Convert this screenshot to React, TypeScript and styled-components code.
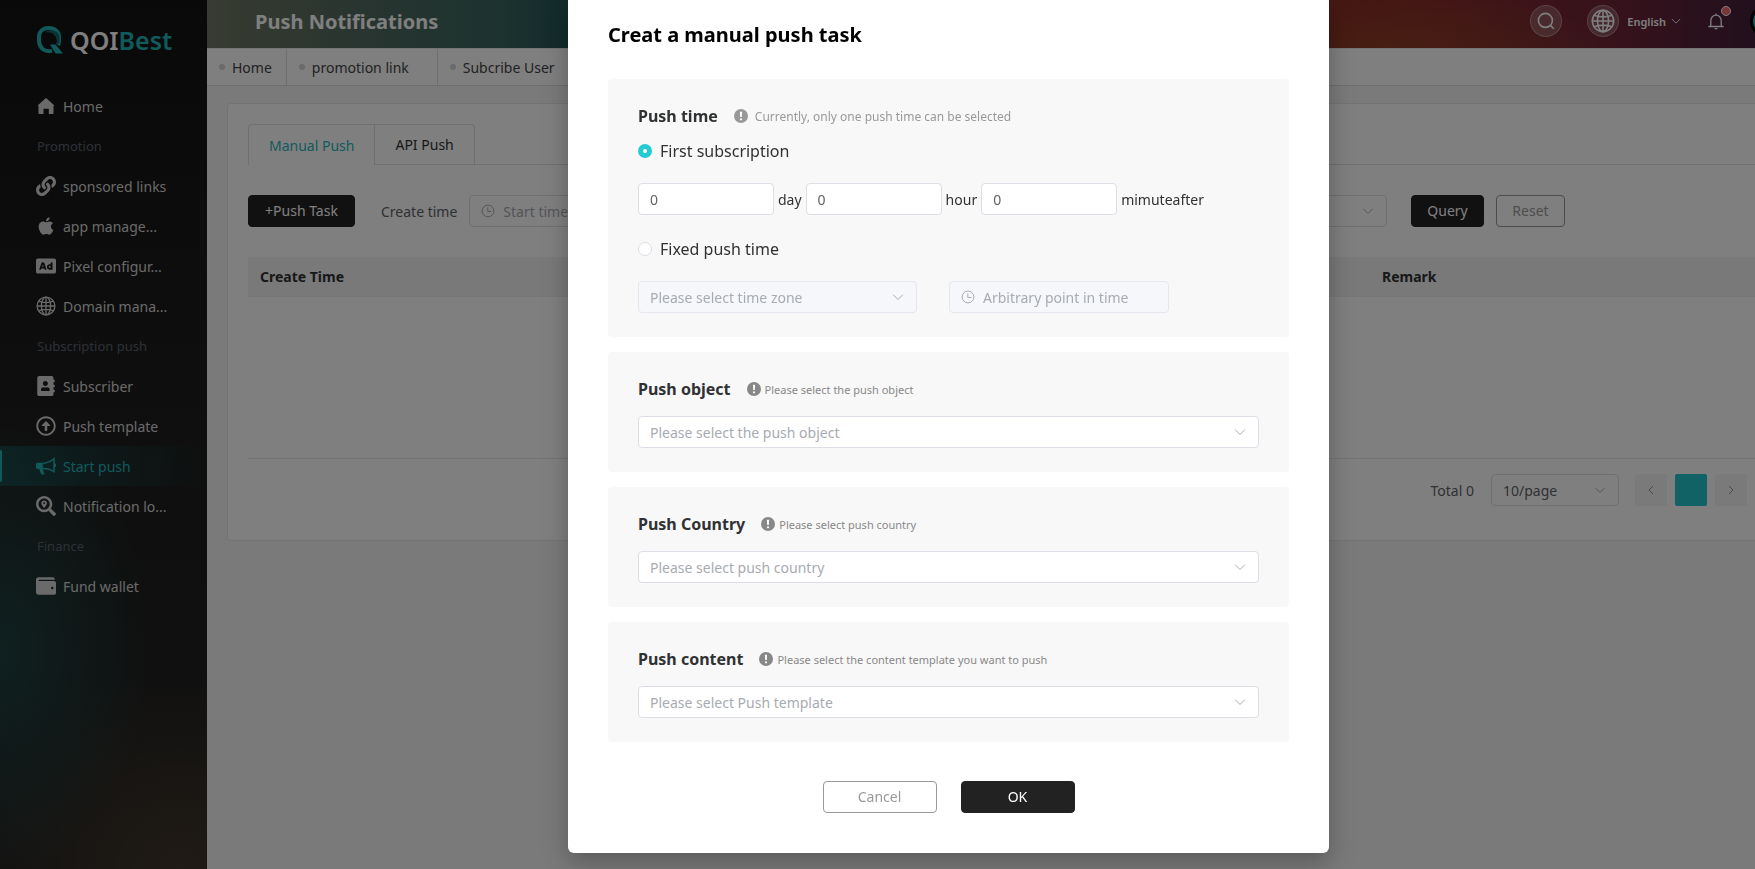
import React from "react";
import styled, { createGlobalStyle, css } from "styled-components";
import {
  FaAd,
  FaAddressBook,
  FaApple,
  FaLink,
  FaRegArrowAltCircleUp,
  FaSearchLocation,
  FaWallet,
} from "react-icons/fa";

const GlobalStyle = createGlobalStyle`
  *, *::before, *::after { box-sizing: border-box; }
  html, body, #root { height: 100%; }
  body { margin: 0; overflow: hidden; background: #f5f5f5; color: #303133; }
  body, button, input, select {
    font-family: "Noto Sans", "Open Sans", sans-serif;
    font-size: 14px;
  }
  h1, h2, h3, ul, p { margin: 0; padding: 0; font-weight: inherit; }
`;

/* ---------- icons ---------- */

const Stroke = styled.svg.attrs({ fill: "none", stroke: "currentColor" })<{ $size: number }>`
  width: ${(p) => p.$size}px;
  height: ${(p) => p.$size}px;
  flex: none;
`;

const ChevronDown = ({ size = 14 }: { size?: number }) => (
  <Stroke $size={size} viewBox="0 0 14 14" aria-hidden="true">
    <path d="M2.2 4.7 7 9.5l4.8-4.8" />
  </Stroke>
);

const ChevronSide = ({ flip }: { flip?: boolean }) => (
  <Stroke $size={12} viewBox="0 0 12 12" aria-hidden="true">
    <path d={flip ? "M4 2l4 4-4 4" : "M8 2 4 6l4 4"} />
  </Stroke>
);

const ClockIcon = () => (
  <Stroke $size={14} viewBox="0 0 14 14" aria-hidden="true">
    <circle cx="7" cy="7" r="5.9" />
    <path d="M6.8 3.4v4.1h3.6" />
  </Stroke>
);

const GlobeIcon = ({ size }: { size: number }) => (
  <Stroke $size={size} viewBox="0 0 20 20" strokeWidth="1.3" aria-hidden="true">
    <circle cx="10" cy="10" r="8.9" />
    <ellipse cx="10" cy="10" rx="4.6" ry="8.9" />
    <path d="M10 1v18M1 10h18M2.6 5.2c4 1.8 10.8 1.8 14.8 0M2.6 14.8c4-1.8 10.8-1.8 14.8 0" />
  </Stroke>
);

const SearchIcon = () => (
  <Stroke $size={18} viewBox="0 0 18 18" strokeWidth="1.6" aria-hidden="true">
    <circle cx="8.4" cy="8.4" r="7" />
    <path d="m13.4 13.4 3.4 3.4" />
  </Stroke>
);

const BellIcon = () => (
  <Stroke $size={18} viewBox="0 0 18 18" strokeWidth="1.3" aria-hidden="true">
    <path d="M3.8 14.3V8.4a5.2 5.2 0 0 1 10.4 0v5.9M1.4 14.5h15.2M9 1.4v1.8M7.6 16.6h2.8" />
  </Stroke>
);

const HomeIcon = () => (
  <svg viewBox="0 0 20 20" fill="currentColor" aria-hidden="true">
    <path d="M9.3 2.6a1 1 0 0 1 1.4 0l7.1 6.3c.5.5.3 1-.3 1v7.3c0 .5-.3.8-.8.8h-3.9v-5.2H7.5V18H3.3c-.5 0-.8-.3-.8-.8V9.9c-.6 0-.8-.5-.3-1z" />
  </svg>
);

const MegaphoneIcon = () => (
  <svg viewBox="0 0 20 20" aria-hidden="true">
    <path
      fill="currentColor"
      d="M1.5 6.8h5.3v6.6l1.5 4.1c.2.5 0 .9-.5.9H5.9c-.5 0-.8-.2-1-.6L3.3 12.9H1.5c-.9 0-1.5-.6-1.5-1.5V8.3c0-.9.6-1.5 1.5-1.5z"
    />
    <path
      fill="none"
      stroke="currentColor"
      strokeWidth="1.5"
      d="M7 7.4c4.4-.4 7.9-2 11-4.7v13c-3.1-2.2-6.6-3.2-11-3.2M18 7.7c1.8.4 1.8 2.8 0 3.2"
    />
  </svg>
);

const InfoMark = () => (
  <svg width="14" height="14" viewBox="0 0 14 14" aria-hidden="true">
    <circle cx="7" cy="7" r="7" fill="currentColor" />
    <path d="M5.9 2.8h2.2l-.3 5.3H6.2z" fill="#fff" />
    <circle cx="7" cy="10.3" r="1.1" fill="#fff" />
  </svg>
);

const LogoMark = () => (
  <svg width="26" height="28" viewBox="0 0 26 28" aria-hidden="true">
    <path
      fill="none"
      stroke="#22b4b9"
      strokeWidth="4"
      d="M15 24.9C6.5 26.5 2 21 2 14.5V11C2 5.5 6 2 11.5 2 18 2 22 5.5 22 11v4c0 1.5-.4 3-1 4"
    />
    <path d="M8 6.5C12 3 20 3.5 22.5 9.5v7L20 19.5C20.5 11 17 5 8 6.5z" fill="#14666a" />
    <path d="M13 18.5h5.5l7.5 9h-7.5z" fill="#22b4b9" />
  </svg>
);

/* ---------- sidebar ---------- */

const Shell = styled.div`
  display: flex;
  min-height: 100%;
`;

const Sidebar = styled.aside`
  flex: none;
  width: 207px;
  background:
    radial-gradient(ellipse 150px 230px at 0 650px, rgba(30, 74, 72, 0.8), rgba(30, 74, 72, 0) 100%),
    radial-gradient(ellipse 220px 200px at 180px 100%, rgba(74, 60, 46, 0.75), rgba(74, 60, 46, 0) 100%),
    linear-gradient(#131313, #1e1e1e 50%, #222);
`;

const Logo = styled.div`
  display: flex;
  align-items: center;
  gap: 7px;
  height: 86px;
  padding: 0 0 6px 37px;
  font-size: 25px;
  font-weight: 600;
  line-height: 28px;
  color: #fff;
`;

const LogoTail = styled.span`
  color: #22b4b9;
`;

const NavList = styled.ul`
  list-style: none;
`;

const NavGroup = styled.li`
  padding-left: 37px;
  font-size: 13px;
  line-height: 40px;
  color: #5a616e;
`;

const NavLink = styled.a<{ $active?: boolean }>`
  position: relative;
  display: flex;
  align-items: center;
  gap: 7px;
  height: 40px;
  padding: 0 36px;
  color: #d4d4d4;
  text-decoration: none;
  white-space: nowrap;

  svg {
    width: 20px;
    height: 20px;
    flex: none;
  }

  ${(p) =>
    p.$active &&
    css`
      color: #22b4b9;
      background: linear-gradient(90deg, rgba(20, 120, 124, 0.4), rgba(20, 120, 124, 0));

      &::before {
        content: "";
        position: absolute;
        left: 0;
        top: 4px;
        width: 2px;
        height: 32px;
        border-radius: 0 2px 2px 0;
        background: #22b4b9;
      }
    `}
`;

type NavEntry = { group: string } | { label: string; icon: React.ReactNode; active?: boolean };

const NAV: NavEntry[] = [
  { label: "Home", icon: <HomeIcon /> },
  { group: "Promotion" },
  { label: "sponsored links", icon: <FaLink /> },
  { label: "app manage...", icon: <FaApple /> },
  { label: "Pixel configur...", icon: <FaAd /> },
  { label: "Domain mana...", icon: <GlobeIcon size={20} /> },
  { group: "Subscription push" },
  { label: "Subscriber", icon: <FaAddressBook /> },
  { label: "Push template", icon: <FaRegArrowAltCircleUp /> },
  { label: "Start push", icon: <MegaphoneIcon />, active: true },
  { label: "Notification lo...", icon: <FaSearchLocation /> },
  { group: "Finance" },
  { label: "Fund wallet", icon: <FaWallet /> },
];

/* ---------- page header ---------- */

const Main = styled.main`
  flex: 1;
  min-width: 0;
`;

const Header = styled.header`
  display: flex;
  align-items: center;
  height: 48px;
  padding: 0 0 6px 48px;
  overflow: hidden;
  color: #fff;
  background:
    radial-gradient(ellipse 240px 56px at 76% 100%, rgba(150, 84, 30, 0.45), rgba(150, 84, 30, 0)),
    linear-gradient(90deg, #707660 0, #546a60 9%, #38665f 19%, #265658 23%, #402030 50%, #8a2c26 72%, #862a2c 80%, #6a2438 92%, #42203a 100%);
`;

const PageTitle = styled.h1`
  flex: 1;
  font-size: 20px;
  font-weight: 700;
`;

const HeaderTools = styled.div`
  display: flex;
  align-items: center;
  gap: 25px;
  height: 42px;
`;

const RoundButton = styled.button`
  display: grid;
  place-items: center;
  width: 32px;
  height: 32px;
  padding: 0;
  color: #fff;
  border: 1px solid rgba(255, 255, 255, 0.3);
  border-radius: 50%;
  background: rgba(255, 255, 255, 0.2);
`;

const Language = styled.button`
  display: flex;
  align-items: center;
  gap: 4px;
  margin-left: -17px;
  padding: 0;
  font-size: 11px;
  font-weight: 600;
  color: #fff;
  border: 0;
  background: none;
`;

const BellButton = styled.button`
  position: relative;
  display: grid;
  padding: 0;
  color: #fff;
  border: 0;
  background: none;
`;

const BellDot = styled.span`
  position: absolute;
  top: -6px;
  right: -6px;
  width: 10px;
  height: 10px;
  border: 1px solid #fff;
  border-radius: 50%;
  background: #f56c6c;
`;

const Avatar = styled.span`
  flex: none;
  width: 32px;
  height: 32px;
  margin-right: -27px;
  border: 3px solid #000;
  border-radius: 50%;
  background: #22b4b9;
`;

const VisitedTabs = styled.nav`
  display: flex;
  height: 38px;
  border-top: 1px solid #e8e8e8;
  border-bottom: 1px solid #dcdcdc;
  background: #fff;
`;

const VisitedTab = styled.a<{ $closable?: boolean }>`
  display: flex;
  align-items: center;
  gap: 7px;
  padding: 0 ${(p) => (p.$closable ? 28 : 14)}px 0 12px;
  color: #444;
  text-decoration: none;
  white-space: nowrap;
  border-right: 1px solid #dcdcdc;

  &::before {
    content: "";
    width: 6px;
    height: 6px;
    border-radius: 50%;
    background: #d4d4d4;
  }
`;

/* ---------- page content ---------- */

const Card = styled.section`
  margin: 17px 0 0 20px;
  padding: 20px 0 34px 20px;
  border: solid #e4e7ed;
  border-width: 1px 0 1px 1px;
  border-radius: 4px 0 0 4px;
  background: #fff;
`;

const TabStrip = styled.div`
  display: flex;
  height: 41px;
  border-bottom: 1px solid #dfdfdf;
`;

const TabButton = styled.button<{ $active?: boolean }>`
  height: ${(p) => (p.$active ? 41 : 40)}px;
  padding: 0 20px;
  color: ${(p) => (p.$active ? "#25b5ba" : "#303133")};
  border: solid #dfdfdf;
  border-width: 1px 1px 0 ${(p) => (p.$active ? 1 : 0)}px;
  border-radius: ${(p) => (p.$active ? "4px 0 0 0" : "0 4px 0 0")};
  background: #fff;
`;

const Filters = styled.form`
  display: flex;
  align-items: center;
  height: 32px;
  margin: 30px 190px 30px 0;
`;

const Button = styled.button<{ $dark?: boolean; $width?: number }>`
  flex: none;
  width: ${(p) => (p.$width ? `${p.$width}px` : "auto")};
  height: 32px;
  padding: 0;
  line-height: 20px;
  white-space: nowrap;
  color: ${(p) => (p.$dark ? "#fff" : "#999")};
  border: 1px solid ${(p) => (p.$dark ? "#222" : "#999")};
  border-radius: 4px;
  background: ${(p) => (p.$dark ? "#222" : "#fff")};
`;

const FilterLabel = styled.label`
  padding: 0 12px 0 26px;
  color: #606266;
  white-space: nowrap;
`;

const FilterActions = styled.div`
  display: flex;
  gap: 12px;
  margin-left: 24px;
`;

const Field = styled.div<{ $width?: number; $disabled?: boolean; $grow?: boolean }>`
  display: flex;
  align-items: center;
  ${(p) => (p.$grow ? "flex: 1;" : "flex: none;")}
  width: ${(p) => (p.$width ? `${p.$width}px` : "auto")};
  height: 32px;
  padding: 0 11px;
  gap: 8px;
  color: #a8abb2;
  border: 1px solid ${(p) => (p.$disabled ? "#e4e7ed" : "#dcdfe6")};
  border-radius: 4px;
  background: ${(p) => (p.$disabled ? "#f5f7fa" : "#fff")};
`;

const TextInput = styled.input`
  flex: 1;
  width: 0;
  min-width: 0;
  height: 30px;
  padding: 0;
  color: #606266;
  border: 0;
  outline: 0;
  background: none;

  &::placeholder {
    color: #a8abb2;
    opacity: 1;
  }
`;

const NativeSelect = styled.select<{ $filled?: boolean }>`
  flex: 1;
  width: 0;
  height: 30px;
  padding: 0;
  color: ${(p) => (p.$filled ? "#606266" : "#a8abb2")};
  opacity: 1;
  border: 0;
  outline: 0;
  appearance: none;
  background: none;
`;

const DataTable = styled.table`
  width: 100%;
  table-layout: fixed;
  border-spacing: 0;

  th {
    height: 40px;
    padding: 0 12px;
    text-align: left;
    font-weight: 700;
    color: #303133;
    border-bottom: 1px solid #ebeef5;
    background: #f2f2f2;
  }

  td {
    height: 162px;
    border-bottom: 1px solid #e4e7ed;
  }
`;

const Pagination = styled.div`
  display: flex;
  align-items: center;
  justify-content: flex-end;
  margin: 15px 8px 0 0;
  color: #606266;
`;

const Pager = styled.div`
  display: flex;
  gap: 8px;
  margin-left: 16px;
`;

const PageButton = styled.button<{ $current?: boolean }>`
  display: grid;
  place-items: center;
  width: 32px;
  height: 32px;
  padding: 0;
  color: #909399;
  border: 0;
  border-radius: 2px;
  background: ${(p) => (p.$current ? "#20c4ca" : "#f4f4f6")};
`;

const PageTotal = styled.span`
  margin-right: 17px;
`;

/* ---------- dialog ---------- */

const Overlay = styled.div`
  position: fixed;
  inset: 0;
  display: flex;
  justify-content: center;
  align-items: flex-start;
  padding-left: 142px;
  background: rgba(0, 0, 0, 0.5);
`;

const Dialog = styled.div`
  width: 761px;
  padding: 20px 40px 40px;
  border-radius: 0 0 6px 6px;
  background: #fff;
  box-shadow: 0 12px 32px 4px rgba(0, 0, 0, 0.12), 0 8px 20px rgba(0, 0, 0, 0.16);
`;

const DialogTitle = styled.h2`
  margin-bottom: 29px;
  font-size: 20px;
  font-weight: 700;
  line-height: 30px;
  color: #000;
`;

const Panels = styled.div`
  display: grid;
  gap: 15px;
`;

const Panel = styled.section`
  padding: 25px 30px 24px;
  border-radius: 4px;
  background: #f8f8f8;
`;

const PanelHead = styled.div`
  display: flex;
  align-items: center;
  gap: 16px;
  height: 24px;
`;

const PanelTitle = styled.h3`
  font-size: 16px;
  font-weight: 700;
  line-height: 24px;
  color: #303133;
`;

const Hint = styled.p<{ $large?: boolean }>`
  display: flex;
  align-items: center;
  gap: ${(p) => (p.$large ? 7 : 4)}px;
  font-size: ${(p) => (p.$large ? 12 : 11)}px;
  color: ${(p) => (p.$large ? "#999" : "#888")};
`;

const PanelBody = styled.div`
  display: flex;
  margin-top: 15px;

  > * {
    flex: 1;
  }
`;

const RadioLine = styled.label<{ $gap: number }>`
  display: flex;
  align-items: center;
  gap: 8px;
  height: 24px;
  margin-top: ${(p) => p.$gap}px;
  font-size: 16px;
`;

const Radio = styled.input.attrs({ type: "radio" })`
  width: 14px;
  height: 14px;
  margin: 0;
  appearance: none;
  border: 1px solid #dcdfe6;
  border-radius: 50%;
  background: #fff;

  &:checked {
    border: 5px solid #26cad3;
  }
`;

const InlineRow = styled.div<{ $gap: number }>`
  display: flex;
  align-items: center;
  gap: ${(p) => p.$gap}px;
  margin-top: 20px;
`;

const DialogFooter = styled.div`
  display: flex;
  justify-content: center;
  gap: 24px;
  margin-top: 39px;
`;

type SelectProps = {
  label: string;
  text: string;
  width?: number;
  disabled?: boolean;
  filled?: boolean;
};

const SelectBox = ({ label, text, width, disabled, filled }: SelectProps) => (
  <Field $width={width} $disabled={disabled}>
    <NativeSelect aria-label={label} disabled={disabled} $filled={filled}>
      <option>{text}</option>
    </NativeSelect>
    <ChevronDown />
  </Field>
);

const PANELS = [
  { title: "Push object", hint: "Please select the push object", text: "Please select the push object" },
  { title: "Push Country", hint: "Please select push country", text: "Please select push country" },
  {
    title: "Push content",
    hint: "Please select the content template you want to push",
    text: "Please select Push template",
  },
];

const DURATIONS = [
  { id: "days", unit: "day" },
  { id: "hours", unit: "hour" },
  { id: "minutes", unit: "mimuteafter" },
];

export default function App() {
  return (
    <>
      <GlobalStyle />
      <Shell>
        <Sidebar>
          <Logo>
            <LogoMark />
            <span>
              QOI<LogoTail>Best</LogoTail>
            </span>
          </Logo>
          <NavList>
            {NAV.map((entry) =>
              "group" in entry ? (
                <NavGroup key={entry.group}>{entry.group}</NavGroup>
              ) : (
                <li key={entry.label}>
                  <NavLink href="#" $active={entry.active}>
                    {entry.icon}
                    {entry.label}
                  </NavLink>
                </li>
              )
            )}
          </NavList>
        </Sidebar>

        <Main>
          <Header>
            <PageTitle>Push Notifications</PageTitle>
            <HeaderTools>
              <RoundButton aria-label="Search">
                <SearchIcon />
              </RoundButton>
              <RoundButton aria-label="Language">
                <GlobeIcon size={24} />
              </RoundButton>
              <Language>
                English
                <ChevronDown size={12} />
              </Language>
              <BellButton aria-label="Notifications">
                <BellIcon />
                <BellDot />
              </BellButton>
              <Avatar />
            </HeaderTools>
          </Header>

          <VisitedTabs>
            <VisitedTab href="#">Home</VisitedTab>
            <VisitedTab href="#" $closable>
              promotion link
            </VisitedTab>
            <VisitedTab href="#" $closable>
              Subcribe User
            </VisitedTab>
          </VisitedTabs>

          <Card>
            <TabStrip>
              <TabButton $active>Manual Push</TabButton>
              <TabButton>API Push</TabButton>
            </TabStrip>

            <Filters>
              <Button type="button" $dark $width={107}>
                +Push Task
              </Button>
              <FilterLabel htmlFor="create-time">Create time</FilterLabel>
              <Field $grow>
                <ClockIcon />
                <TextInput id="create-time" placeholder="Start time" />
                <ChevronDown />
              </Field>
              <FilterActions>
                <Button type="button" $dark $width={73}>
                  Query
                </Button>
                <Button type="button" $width={69}>
                  Reset
                </Button>
              </FilterActions>
            </Filters>

            <DataTable>
              <colgroup>
                <col />
                <col width="385" />
              </colgroup>
              <thead>
                <tr>
                  <th>Create Time</th>
                  <th>Remark</th>
                </tr>
              </thead>
              <tbody>
                <tr>
                  <td colSpan={2} />
                </tr>
              </tbody>
            </DataTable>

            <Pagination>
              <PageTotal>Total 0</PageTotal>
              <SelectBox label="Rows per page" text="10/page" width={128} filled />
              <Pager>
                <PageButton aria-label="Previous page">
                  <ChevronSide />
                </PageButton>
                <PageButton aria-label="Current page" $current />
                <PageButton aria-label="Next page">
                  <ChevronSide flip />
                </PageButton>
              </Pager>
            </Pagination>
          </Card>
        </Main>
      </Shell>

      <Overlay>
        <Dialog role="dialog" aria-modal="true" aria-labelledby="dialog-title">
          <DialogTitle id="dialog-title">Creat a manual push task</DialogTitle>
          <Panels>
            <Panel>
              <PanelHead>
                <PanelTitle>Push time</PanelTitle>
                <Hint $large>
                  <InfoMark />
                  Currently, only one push time can be selected
                </Hint>
              </PanelHead>
              <RadioLine $gap={11}>
                <Radio name="push-time" defaultChecked />
                First subscription
              </RadioLine>
              <InlineRow $gap={4}>
                {DURATIONS.map(({ id, unit }) => (
                  <React.Fragment key={id}>
                    <Field $width={136}>
                      <TextInput id={id} defaultValue="0" />
                    </Field>
                    <label htmlFor={id}>{unit}</label>
                  </React.Fragment>
                ))}
              </InlineRow>
              <RadioLine $gap={22}>
                <Radio name="push-time" />
                Fixed push time
              </RadioLine>
              <InlineRow $gap={32}>
                <SelectBox label="Time zone" text="Please select time zone" width={279} disabled />
                <Field $width={220} $disabled>
                  <ClockIcon />
                  <TextInput aria-label="Push time" placeholder="Arbitrary point in time" disabled />
                </Field>
              </InlineRow>
            </Panel>

            {PANELS.map(({ title, hint, text }) => (
              <Panel key={title}>
                <PanelHead>
                  <PanelTitle>{title}</PanelTitle>
                  <Hint>
                    <InfoMark />
                    {hint}
                  </Hint>
                </PanelHead>
                <PanelBody>
                  <SelectBox label={title} text={text} />
                </PanelBody>
              </Panel>
            ))}
          </Panels>
          <DialogFooter>
            <Button $width={114}>Cancel</Button>
            <Button $dark $width={114}>
              OK
            </Button>
          </DialogFooter>
        </Dialog>
      </Overlay>
    </>
  );
}
